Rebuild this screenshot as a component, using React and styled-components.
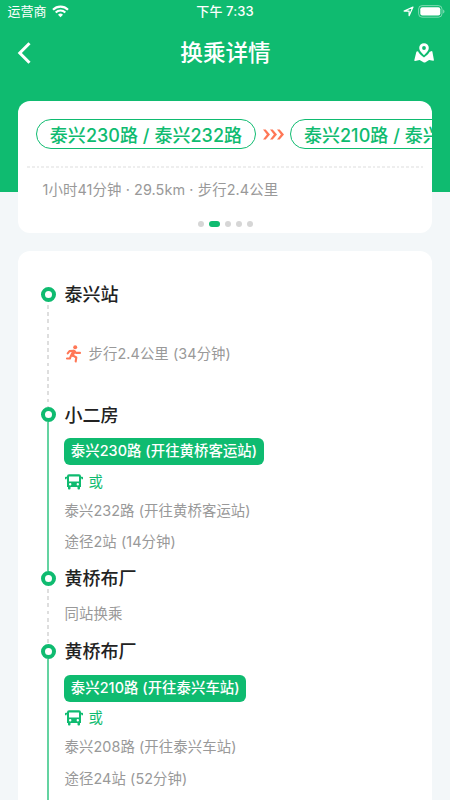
import React from 'react';
import styled, { createGlobalStyle, css } from 'styled-components';

const GREEN = '#0fbb70';
const CORAL = '#ff7756';

const GlobalStyle = createGlobalStyle`
  * { box-sizing: border-box; }
  html, body { margin: 0; padding: 0; overflow: hidden; }
  body {
    background: #f3f7f9;
    font-family: Inter, 'Noto Sans CJK SC', sans-serif;
    -webkit-font-smoothing: antialiased;
  }
`;

const Screen = styled.div`
  width: 450px;
  height: 800px;
  overflow: hidden;
  display: flex;
  flex-direction: column;
  background: linear-gradient(${GREEN} 192px, #f3f7f9 192px);
`;

const StatusBar = styled.div`
  height: 24px;
  flex: none;
  padding: 0 5px 0 7.5px;
  display: grid;
  grid-template-columns: 1fr auto 1fr;
  align-items: center;
  color: #fff;
  font-size: 13px;
  line-height: 24px;
`;

const StatusGroup = styled.div`
  display: flex;
  align-items: center;
  gap: ${(p) => p.$gap}px;
  justify-content: ${(p) => (p.$end ? 'flex-end' : 'flex-start')};
  margin-top: -2px;
`;

const Clock = styled.span`
  font-weight: 500;
  margin: -2px 2.5px 0 0;
  letter-spacing: 0.1px;
`;

const NavBar = styled.header`
  height: 77px;
  flex: none;
  padding: 0 16px 20px 17px;
  display: flex;
  align-items: center;
  justify-content: space-between;
  color: #fff;
`;

const NavTitle = styled.h1`
  margin: 1px 0 0;
  font-size: 22.6px;
  line-height: 30px;
  font-weight: 500;
`;

const NavButton = styled.button`
  width: 22px;
  height: 26px;
  padding: 0;
  border: 0;
  background: none;
  color: inherit;
  display: flex;
  align-items: center;
  justify-content: ${(p) => (p.$end ? 'flex-end' : 'flex-start')};
`;

const Card = styled.section`
  flex: none;
  margin: 0 18px;
  background: #fff;
  border-radius: 12px;
  overflow: hidden;
`;

const SummaryCard = styled(Card)`
  height: 132px;
  padding-top: 18px;
`;

const RouteRow = styled.div`
  display: flex;
  align-items: center;
  gap: 6.6px;
  padding-left: 18px;
  height: 30px;

  svg { flex: none; }
`;

const RoutePill = styled.span`
  flex: none;
  height: 30px;
  padding: 1px 12.8px 0;
  border: 1.2px solid ${GREEN};
  border-radius: 15px;
  color: ${GREEN};
  font-size: 18px;
  line-height: 29px;
  font-weight: 500;
  letter-spacing: 0.04px;
  white-space: nowrap;
`;

const Divider = styled.div`
  height: 2px;
  margin: 17px 9px 0;
  background: repeating-linear-gradient(90deg, #eee 0 2.8px, transparent 2.8px 4.8px);
`;

const Summary = styled.p`
  margin: 9px 0 0 24.5px;
  height: 24px;
  color: #999;
  font-size: 14.4px;
  line-height: 25px;
  letter-spacing: 0.1px;
`;

const Pager = styled.div`
  margin-top: 20px;
  display: flex;
  justify-content: center;
  gap: 5px;
`;

const PagerDot = styled.i`
  width: ${(p) => (p.$active ? 11 : 6)}px;
  height: 6px;
  border-radius: 3px;
  background: ${(p) => (p.$active ? GREEN : '#d6d6d6')};
`;

const TimelineCard = styled(Card)`
  margin-top: 18px;
  padding: 33px 0 0 23px;
  height: 580px;
`;

const Step = styled.div`
  display: grid;
  grid-template-columns: 14px 1fr;
  column-gap: 9.5px;
  height: ${(p) => p.$height}px;
`;

const Rail = styled.div`
  display: flex;
  flex-direction: column;
  align-items: center;
  padding-top: 2.5px;
`;

const Ring = styled.i`
  flex: none;
  width: 15px;
  height: 15px;
  border: 4px solid ${GREEN};
  border-radius: 50%;
`;

const Track = styled.i`
  flex: 1;
  width: 2px;
  margin-bottom: -2.5px;
  ${(p) => (p.$walking
    ? css`
        margin-top: 3px;
        background: repeating-linear-gradient(#dedede 0 3.8px, transparent 3.8px 7.2px);
      `
    : css`background: #64d3a1;`)}
`;

const Details = styled.div`
  display: flex;
  flex-direction: column;
  align-items: flex-start;
`;

const Station = styled.h2`
  margin: 0;
  height: 20px;
  color: #222;
  font-size: 18px;
  line-height: 21px;
  font-weight: 500;
`;

const Line = styled.p`
  margin: ${(p) => p.$top}px 0 0;
  height: 20px;
  display: flex;
  align-items: center;
  gap: 6px;
  color: ${(p) => (p.$green ? GREEN : '#999')};
  font-size: 14.4px;
  line-height: 20px;
  letter-spacing: 0.08px;
  white-space: pre;
`;

const LineTag = styled.span`
  margin: 13.5px 0 0 -0.2px;
  height: 27px;
  padding: 0 6.5px;
  border-radius: 6px;
  background: ${GREEN};
  color: #fff;
  font-size: 14.4px;
  line-height: 26px;
  font-weight: 500;
  letter-spacing: 0.05px;
  white-space: nowrap;
`;

const Wifi = () => (
  <svg width="17" height="13" viewBox="0 0 17 13" fill="none" stroke="currentColor" strokeWidth="2.1">
    <path d="M1 4.7a10.6 10.6 0 0 1 15 0M3.7 7.5a6.8 6.8 0 0 1 9.6 0" />
    <path d="M8.5 12.2 6 9.7a3.5 3.5 0 0 1 5 0Z" fill="currentColor" stroke="none" />
  </svg>
);

const LocationArrow = () => (
  <svg width="11" height="11" viewBox="0 0 11 11" fill="none" stroke="currentColor" strokeWidth="1.2" strokeLinejoin="round">
    <path d="M10 1 6.1 9.7V5.1H1.1Z" />
  </svg>
);

const Battery = () => (
  <svg width="27" height="13" viewBox="0 0 27 13">
    <rect x=".6" y=".6" width="23.4" height="11.6" rx="3.5" fill="none" stroke="#fff" strokeOpacity=".45" />
    <rect x="2.3" y="2.3" width="20" height="8.2" rx="2" fill="#fff" />
    <path d="M25.2 4.4c1.7.7 1.7 3.3 0 4Z" fill="#fff" fillOpacity=".5" />
  </svg>
);

const BackIcon = () => (
  <svg width="15" height="22" viewBox="0 0 15 22" fill="none" stroke="currentColor" strokeWidth="3">
    <path d="M12.5 1.3 2.8 11l9.7 9.7" />
  </svg>
);

const MapIcon = () => (
  <svg width="20" height="20" viewBox="0 0 20 20" fill="currentColor">
    <path fillRule="evenodd" d="M10 .2a4.8 4.8 0 0 1 4.8 4.8c0 2.8-2.5 5-4.8 7.2C7.7 10 5.2 7.8 5.2 5A4.8 4.8 0 0 1 10 .2Zm0 2.9a1.900 1.900 0 1 0 0 3.800 1.900 1.900 0 0 0 0-3.800Z" />
    <path d="M4 8.300c1 2.300 3.300 4.200 6 6.300 2.600-2.100 4.600-3.600 5.700-5.800l1.700-.6c.5-.2.900 0 1 .5l1.500 8.300c.1.500-.2.800-.7.700l-4.100-.8-4 2.500c-.4.200-.8.200-1.200 0l-4.300-2.500-4.500 1.200c-.6.100-.9-.2-.8-.8l1.900-7.900c.1-.4.300-.7.700-.8Z" />
  </svg>
);

const BusIcon = () => (
  <svg width="18" height="18" viewBox="0 0 18 18" fill="currentColor">
    <path
      fillRule="evenodd"
      d="M4 1.200h10a2 2 0 0 1 2 2V14h-1v1.500a.9.900 0 0 1-.9.900h-.7a.9.900 0 0 1-.9-.9V14h-7v1.500a.9.900 0 0 1-.9.900h-.7a.9.900 0 0 1-.9-.9V14H2V3.200a2 2 0 0 1 2-2ZM4 3.500v5h10v-5ZM5.200 10.100a1.200 1.200 0 1 0 0 2.400 1.200 1.200 0 0 0 0-2.400Zm7.600 0a1.200 1.200 0 1 0 0 2.400 1.200 1.200 0 0 0 0-2.400Z"
    />
    <path d="M.8 3.700h1.800v1.600H1.500v1H0V4.500a.8.800 0 0 1 .8-.8ZM17.200 3.700h-1.800v1.600h1.100v1H18V4.500a.8.800 0 0 0-.8-.8Z" />
  </svg>
);

const RunnerIcon = () => (
  <svg
    width="18"
    height="18"
    viewBox="0 0 18 18"
    fill="none"
    stroke={CORAL}
    strokeWidth="2.1"
    strokeLinecap="round"
    strokeLinejoin="round"
  >
    <circle cx="10.200" cy="2.300" r="2" fill={CORAL} stroke="none" />
    <path d="M2.700 8.400 4.500 6.100 8.900 5.700l2.300 2.200h3.800" />
    <path d="M8.900 6.700 7.100 10" strokeWidth="3.600" />
    <path d="m7.700 10.300 3.600 2.200-.6 4M5.900 10.900 4.900 13.500H2" />
  </svg>
);

const Chevrons = () => (
  <svg width="21" height="11" viewBox="0 0 21 11" fill={CORAL}>
    {[0, 7, 14].map((x) => (
      <path key={x} transform={`translate(${x} 0)`} d="M0 .4h2.700L7 5.500l-4.300 5.100H0l3.900-5.100Z" />
    ))}
  </svg>
);

function Stop({ name, height, walking, children }) {
  return (
    <Step $height={height}>
      <Rail>
        <Ring />
        <Track $walking={walking} />
      </Rail>
      <Details>
        <Station>{name}</Station>
        {children}
      </Details>
    </Step>
  );
}

function Ride({ line, alternative, distance }) {
  return (
    <>
      <LineTag>{line}</LineTag>
      <Line $top={6.5} $green>
        <BusIcon />
        <span>或</span>
      </Line>
      <Line $top={9}>{alternative}</Line>
      <Line $top={11.5}>{distance}</Line>
    </>
  );
}

export default function App() {
  return (
    <Screen>
      <GlobalStyle />
      <StatusBar>
        <StatusGroup $gap={5}>
          <span>运营商</span>
          <Wifi />
        </StatusGroup>
        <Clock>下午 7:33</Clock>
        <StatusGroup $gap={4} $end>
          <LocationArrow />
          <Battery />
        </StatusGroup>
      </StatusBar>
      <NavBar>
        <NavButton aria-label="返回"><BackIcon /></NavButton>
        <NavTitle>换乘详情</NavTitle>
        <NavButton aria-label="地图" $end><MapIcon /></NavButton>
      </NavBar>
      <SummaryCard>
        <RouteRow>
          <RoutePill>泰兴230路 / 泰兴232路</RoutePill>
          <Chevrons />
          <RoutePill>泰兴210路 / 泰兴208路</RoutePill>
        </RouteRow>
        <Divider />
        <Summary>1小时41分钟 · 29.5km · 步行2.4公里</Summary>
        <Pager>
          {[0, 1, 2, 3, 4].map((i) => <PagerDot key={i} $active={i === 1} />)}
        </Pager>
      </SummaryCard>
      <TimelineCard>
        <Stop name="泰兴站" height={120.5} walking>
          <Line $top={39.5}>
            <RunnerIcon />
            <span>步行2.4公里 (34分钟)</span>
          </Line>
        </Stop>
        <Stop name="小二房" height={163.5}>
          <Ride line="泰兴230路 (开往黄桥客运站)" alternative="泰兴232路 (开往黄桥客运站)" distance="途径2站 (14分钟)" />
        </Stop>
        <Stop name="黄桥布厂" height={73} walking>
          <Line $top={15.5}>同站换乘</Line>
        </Stop>
        <Stop name="黄桥布厂" height={163.5}>
          <Ride line="泰兴210路 (开往泰兴车站)" alternative="泰兴208路 (开往泰兴车站)" distance="途径24站 (52分钟)" />
        </Stop>
      </TimelineCard>
    </Screen>
  );
}
